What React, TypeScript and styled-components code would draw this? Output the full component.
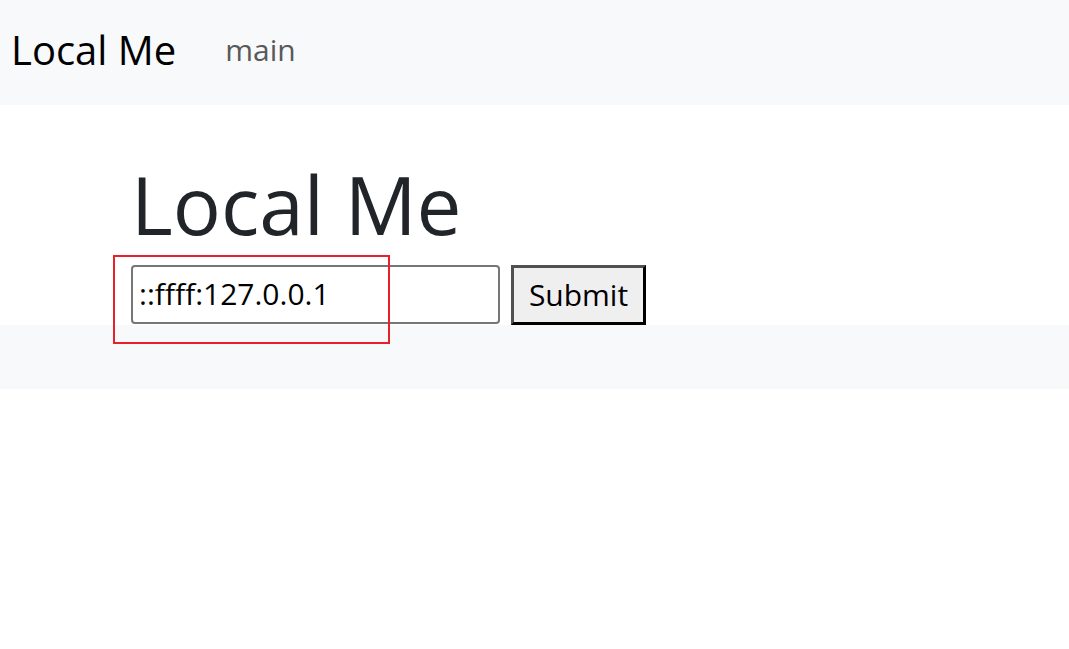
import React from "react";
import styled, { createGlobalStyle } from "styled-components";

const GlobalStyle = createGlobalStyle`
  html, body {
    margin: 0;
    padding: 0;
    background: #ffffff;
    font-family: "Open Sans", "Noto Sans", Arial, sans-serif;
  }
  * { box-sizing: border-box; }
`;

const Page = styled.div`
  position: relative;
  width: 100%;
  min-height: 649px;
`;

const Navbar = styled.nav`
  display: flex;
  align-items: center;
  height: 105px;
  padding: 0 0 6px 11px;
  background: #f8f9fa;
`;

const Brand = styled.a`
  font-size: 40px;
  line-height: 1.2;
  color: #000000;
  text-decoration: none;
`;

const NavLink = styled.a`
  margin-left: 49px;
  font-size: 30px;
  line-height: 1.2;
  color: #595959;
  text-decoration: none;
`;

const Main = styled.main`
  padding: 51px 0 0 131px;
`;

const Title = styled.h1`
  margin: 0;
  font-size: 80px;
  font-weight: 400;
  line-height: 1.2;
  color: #212529;
`;

const Form = styled.form`
  display: flex;
  align-items: flex-start;
  gap: 11px;
  margin-top: 13px;
`;

const Input = styled.input`
  width: 369px;
  height: 59px;
  padding: 0 6px 2px;
  border: 2px solid #767676;
  border-radius: 4px;
  font-family: inherit;
  font-size: 30px;
  color: #000000;
  background: #ffffff;
  outline: none;
`;

const Button = styled.button`
  width: 135px;
  height: 60px;
  padding: 0 0 2px;
  border-width: 3px;
  border-style: solid;
  border-color: #505050 #000000 #000000 #505050;
  background: #efefef;
  font-family: inherit;
  font-size: 30px;
  color: #000000;
`;

const Band = styled.div`
  height: 64px;
  background: #f8f9fa;
`;

const Highlight = styled.div`
  position: absolute;
  left: 113px;
  top: 255px;
  width: 277px;
  height: 89px;
  border: 2px solid #e8202a;
  pointer-events: none;
`;

export default function App() {
  return (
    <Page>
      <GlobalStyle />
      <Navbar>
        <Brand href="#">Local Me</Brand>
        <NavLink href="#">main</NavLink>
      </Navbar>
      <Main>
        <Title>Local Me</Title>
        <Form onSubmit={(e) => e.preventDefault()}>
          <Input type="text" defaultValue="::ffff:127.0.0.1" />
          <Button type="submit">Submit</Button>
        </Form>
      </Main>
      <Band />
      <Highlight />
    </Page>
  );
}
